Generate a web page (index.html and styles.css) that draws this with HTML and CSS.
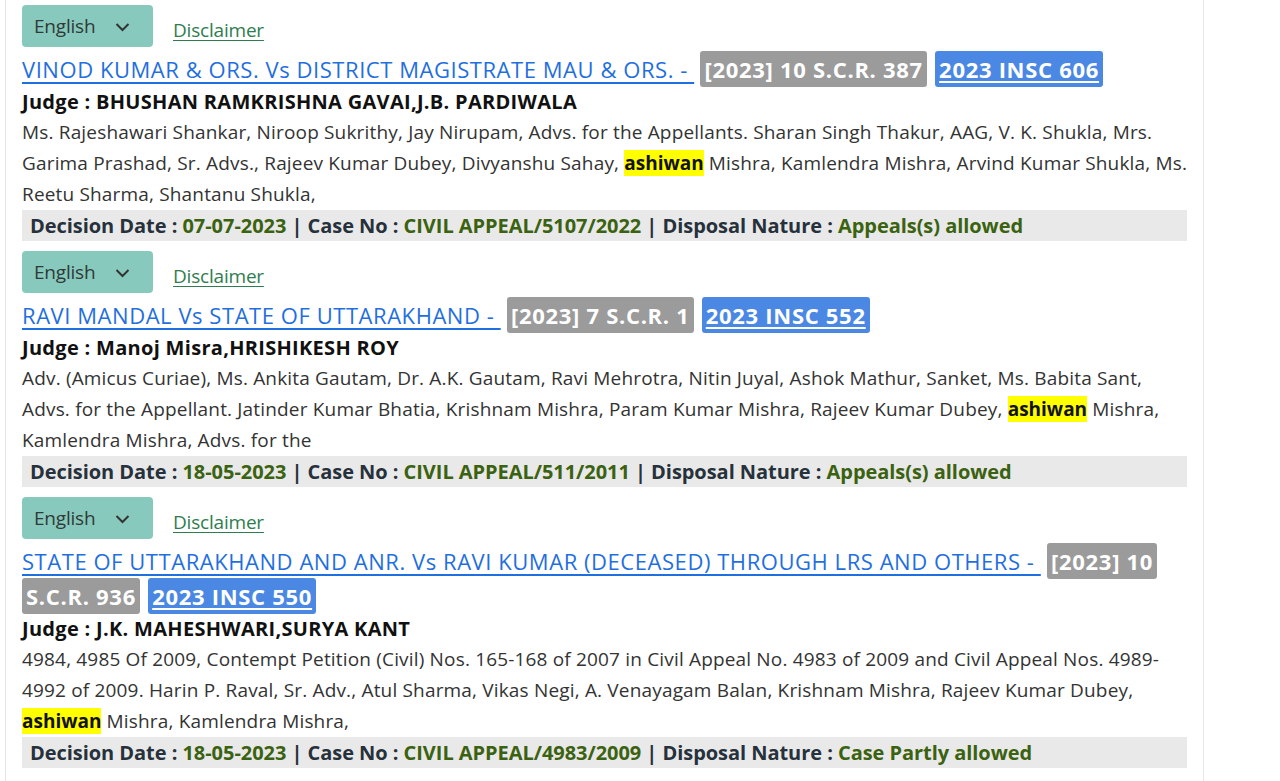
FILE: index.html
```html
<!DOCTYPE html>
<html>
<head>
<meta charset="utf-8">
<link rel="stylesheet" href="styles.css">
</head>
<body>
<div class="panel">
  <div class="card">
    <div class="tools">
      <span class="lang">English <svg class="chev" viewBox="0 0 15 10" width="15" height="10"><path d="M1.5 2 L7.5 8 L13.5 2" fill="none" stroke="#333" stroke-width="2"/></svg></span>
      <a class="disc" href="#">Disclaimer</a>
    </div>
    <div class="title"><a class="tlink" href="#">VINOD KUMAR &amp; ORS. Vs DISTRICT MAGISTRATE MAU &amp; ORS. -&nbsp;</a> <span class="scr">[2023] 10 S.C.R. 387</span> <a class="insc" href="#">2023 INSC 606</a></div>
    <div class="judge">Judge : BHUSHAN RAMKRISHNA GAVAI,J.B. PARDIWALA</div>
    <p class="body">Ms. Rajeshawari Shankar, Niroop Sukrithy, Jay Nirupam, Advs. for the Appellants. Sharan Singh Thakur, AAG, V. K. Shukla, Mrs. Garima Prashad, Sr. Advs., Rajeev Kumar Dubey, Divyanshu Sahay, <mark>ashiwan</mark> Mishra, Kamlendra Mishra, Arvind Kumar Shukla, Ms. Reetu Sharma, Shantanu Shukla,</p>
    <div class="bar">Decision Date : <span class="v">07-07-2023</span> | Case No : <span class="v">CIVIL APPEAL/5107/2022</span> | Disposal Nature : <span class="v">Appeals(s) allowed</span></div>
  </div>
  <div class="card">
    <div class="tools">
      <span class="lang">English <svg class="chev" viewBox="0 0 15 10" width="15" height="10"><path d="M1.5 2 L7.5 8 L13.5 2" fill="none" stroke="#333" stroke-width="2"/></svg></span>
      <a class="disc" href="#">Disclaimer</a>
    </div>
    <div class="title"><a class="tlink" href="#">RAVI MANDAL Vs STATE OF UTTARAKHAND -&nbsp;</a> <span class="scr">[2023] 7 S.C.R. 1</span> <a class="insc" href="#">2023 INSC 552</a></div>
    <div class="judge">Judge : Manoj Misra,HRISHIKESH ROY</div>
    <p class="body">Adv. (Amicus Curiae), Ms. Ankita Gautam, Dr. A.K. Gautam, Ravi Mehrotra, Nitin Juyal, Ashok Mathur, Sanket, Ms. Babita Sant, Advs. for the Appellant. Jatinder Kumar Bhatia, Krishnam Mishra, Param Kumar Mishra, Rajeev Kumar Dubey, <mark>ashiwan</mark> Mishra, Kamlendra Mishra, Advs. for the</p>
    <div class="bar">Decision Date : <span class="v">18-05-2023</span> | Case No : <span class="v">CIVIL APPEAL/511/2011</span> | Disposal Nature : <span class="v">Appeals(s) allowed</span></div>
  </div>
  <div class="card">
    <div class="tools">
      <span class="lang">English <svg class="chev" viewBox="0 0 15 10" width="15" height="10"><path d="M1.5 2 L7.5 8 L13.5 2" fill="none" stroke="#333" stroke-width="2"/></svg></span>
      <a class="disc" href="#">Disclaimer</a>
    </div>
    <div class="title"><a class="tlink" href="#">STATE OF UTTARAKHAND AND ANR. Vs RAVI KUMAR (DECEASED) THROUGH LRS AND OTHERS -&nbsp;</a> <span class="scr">[2023] 10 S.C.R. 936</span> <a class="insc" href="#">2023 INSC 550</a></div>
    <div class="judge">Judge : J.K. MAHESHWARI,SURYA KANT</div>
    <p class="body">4984, 4985 Of 2009, Contempt Petition (Civil) Nos. 165-168 of 2007 in Civil Appeal No. 4983 of 2009 and Civil Appeal Nos. 4989-<wbr>4992 of 2009. Harin P. Raval, Sr. Adv., Atul Sharma, Vikas Negi, A. Venayagam Balan, Krishnam Mishra, Rajeev Kumar Dubey, <mark>ashiwan</mark> Mishra, Kamlendra Mishra,</p>
    <div class="bar">Decision Date : <span class="v">18-05-2023</span> | Case No : <span class="v">CIVIL APPEAL/4983/2009</span> | Disposal Nature : <span class="v">Case Partly allowed</span></div>
  </div>
</div>
</body>
</html>
```
FILE: styles.css
```css
html, body {
  margin: 0;
  padding: 0;
  background: #fff;
}
body {
  font-family: "Open Sans", "Noto Sans", sans-serif;
  color: #333;
  overflow: hidden;
  height: 781px;
}
.panel {
  margin-left: 5px;
  width: 1199px;
  border-left: 1px solid #e6e6e6;
  border-right: 1px solid #e6e6e6;
  padding: 0 16px 0 16px;
  box-sizing: border-box;
  min-height: 781px;
}
.card {
  padding-top: 5px;
  margin-bottom: 5px;
}
.tools {
  display: flex;
  align-items: flex-end;
  height: 42px;
}
.lang {
  display: flex;
  align-items: center;
  box-sizing: border-box;
  width: 131px;
  height: 42px;
  padding-left: 12px;
  background: #88c9bd;
  border-radius: 4px;
  font-size: 19px;
  color: #2f3a38;
  letter-spacing: -0.2px;
}
.chev {
  margin-left: 20px;
  margin-top: 2px;
}
.disc {
  margin-left: 20px;
  font-size: 19px;
  line-height: 26px;
  color: #2f7d4f;
  text-decoration: underline;
  text-underline-offset: 3px;
  margin-bottom: 4px;
  letter-spacing: -0.2px;
}
.title {
  margin-top: 5px;
  font-size: 22px;
  line-height: 35px;
  width: 1140px;
  letter-spacing: 0.55px;
}
.tlink {
  color: #1f6fe0;
  text-decoration: underline;
  text-underline-offset: 4px;
}
.scr, .insc {
  font-weight: 700;
  color: #fff;
  padding: 3px 4px;
  border-radius: 3px;
  -webkit-box-decoration-break: clone;
  box-decoration-break: clone;
  font-size: 22px;
  letter-spacing: 0.7px;
}
.scr {
  background: #9b9b9b;
}
.insc {
  background: #4a88e4;
  text-decoration: underline;
  text-underline-offset: 3px;
  margin-left: 2px;
}
.judge {
  font-weight: 700;
  font-size: 20px;
  line-height: 30px;
  color: #111;
  letter-spacing: 0.3px;
}
.body {
  margin: 0 -8px 0 0;
  font-size: 19px;
  line-height: 31px;
  color: #333;
  letter-spacing: 0.17px;
}
mark {
  background: #ffff00;
  color: #111;
  font-weight: 700;
  letter-spacing: 0;
}
.bar {
  height: 31px;
  line-height: 31px;
  background: #e9e9e9;
  padding-left: 8px;
  font-weight: 700;
  font-size: 20px;
  color: #26313b;
  letter-spacing: -0.05px;
}
.v {
  color: #3b6210;
}
```
